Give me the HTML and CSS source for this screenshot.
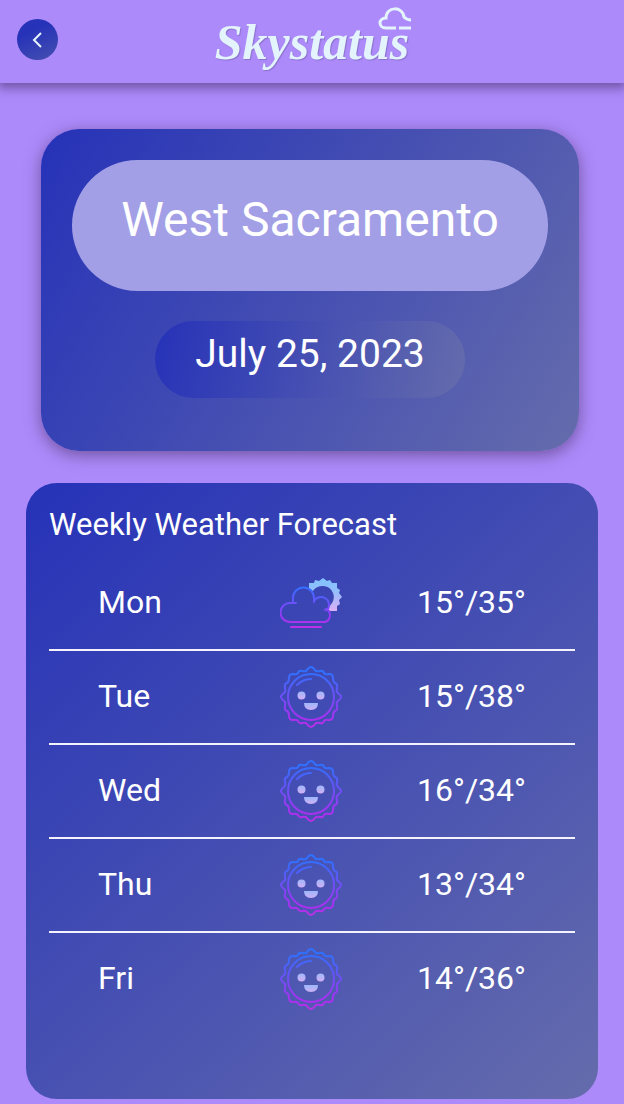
FILE: index.html
```html
<!DOCTYPE html>
<html lang="en">
<head>
<meta charset="utf-8">
<meta name="viewport" content="width=device-width, initial-scale=1">
<title>Skystatus</title>
<link rel="stylesheet" href="styles.css">
</head>
<body>
<svg class="defs" aria-hidden="true">
  <defs>
    <linearGradient id="line" gradientUnits="userSpaceOnUse" x1="0" y1="0" x2="0" y2="62">
      <stop offset="0.1" stop-color="#3070ff"/><stop offset="0.85" stop-color="#a830f0"/><stop offset="1" stop-color="#c030e8"/>
    </linearGradient>
    <linearGradient id="cloudline" gradientUnits="userSpaceOnUse" x1="0" y1="14" x2="0" y2="56">
      <stop offset="0" stop-color="#3070ff"/><stop offset="0.75" stop-color="#9838f5"/><stop offset="1" stop-color="#c030e8"/>
    </linearGradient>
    <linearGradient id="eye" gradientUnits="userSpaceOnUse" x1="0" y1="25" x2="0" y2="34">
      <stop offset="0" stop-color="#9cb8fa"/><stop offset="1" stop-color="#d4aef4"/>
    </linearGradient>
    <linearGradient id="mouth" gradientUnits="userSpaceOnUse" x1="0" y1="37" x2="0" y2="45">
      <stop offset="0" stop-color="#9cb8fa"/><stop offset="1" stop-color="#d4aef4"/>
    </linearGradient>
    <linearGradient id="ring" gradientUnits="userSpaceOnUse" x1="0" y1="6" x2="0" y2="40">
      <stop offset="0" stop-color="#80c4ff"/><stop offset="0.4" stop-color="#94befc"/><stop offset="1" stop-color="#e0aef4"/>
    </linearGradient>
    <symbol id="sun" viewBox="0 0 62 62">
      <g fill="none" stroke="url(#line)" stroke-width="2" stroke-linejoin="round" stroke-linecap="round">
        <path d="M31 1Q33 1 35 4Q36 6 40 5Q43 4 44 7Q45 9 49 8Q53 8 53 12Q53 16 55 17Q58 18 57 22Q56 26 58 27Q61 29 61 31Q61 33 58 35Q56 36 57 40Q58 44 55 45Q53 46 53 50Q53 54 49 54Q45 53 44 55Q43 58 40 57Q36 56 35 58Q33 61 31 61Q29 61 27 58Q26 56 22 57Q19 58 18 55Q17 53 13 54Q9 54 9 50Q9 46 7 45Q4 44 5 40Q6 36 4 35Q1 33 1 31Q1 29 4 27Q6 26 5 22Q4 18 7 17Q9 16 9 12Q9 8 13 8Q17 9 18 7Q19 4 22 5Q26 6 27 4Q29 1 31 1Z"/>
        <circle cx="31" cy="31" r="23"/>
        <path d="M17 19Q23 13 31 13"/>
      </g>
      <circle cx="21.500" cy="29.500" r="4" fill="url(#eye)"/>
      <circle cx="40.500" cy="29.500" r="4" fill="url(#eye)"/>
      <path fill="url(#mouth)" d="M24 37H38Q38 44 31 44Q24 44 24 37Z"/>
    </symbol>
    <symbol id="cloudy" viewBox="0 0 62 62">
      <path fill="url(#ring)" d="M29 11L34 11L35 8L39 9L43 6L47 9L50 8L52 11L57 11L57 16L60 18L59 21L62 25L59 28L60 32L57 34L57 39L50 39L47 37Q50 34 52 31Q55 26 53 21Q50 14 43 14Q36 14 33 19L29 16Z"/>
      <g fill="none" stroke="url(#cloudline)" stroke-width="2" stroke-linecap="round">
        <path d="M16 31H10A9.500 9.500 0 0 0 10 50H45A7 7 0 0 0 46 37"/>
        <path d="M13 30V26A10.500 10.500 0 0 1 34 26V30"/>
        <path d="M34 29A8 8 0 0 1 48 37L45 38"/>
        <path d="M11 55H41"/>
      </g>
    </symbol>
  </defs>
</svg>

<header class="topbar">
  <button class="back" type="button" aria-label="Back">
    <svg class="chevron" viewBox="0 0 16 16" aria-hidden="true"><path d="M11 1L4 8L11 15"/></svg>
  </button>
  <div class="logo">
    <span class="wordmark">Skystatus</span>
    <svg class="logo-cloud" viewBox="0 0 34 24" aria-hidden="true"><path d="M18 21H8C0 21 0 11 8 11C8 -1 25 -1 26 10Q29 13 33 13M21 21H33"/></svg>
  </div>
</header>

<main class="page">
  <section class="place">
    <h1 class="city">West Sacramento</h1>
    <p class="date">July 25, 2023</p>
  </section>
  <section class="forecast">
    <h2 class="title">Weekly Weather Forecast</h2>
    <table class="days">
      <tbody>
        <tr><th scope="row">Mon</th><td><svg class="icon" role="img" aria-label="Partly cloudy"><use href="#cloudy"/></svg></td><td class="temp">15°/35°</td></tr>
        <tr><th scope="row">Tue</th><td><svg class="icon" role="img" aria-label="Sunny"><use href="#sun"/></svg></td><td class="temp">15°/38°</td></tr>
        <tr><th scope="row">Wed</th><td><svg class="icon" role="img" aria-label="Sunny"><use href="#sun"/></svg></td><td class="temp">16°/34°</td></tr>
        <tr><th scope="row">Thu</th><td><svg class="icon" role="img" aria-label="Sunny"><use href="#sun"/></svg></td><td class="temp">13°/34°</td></tr>
        <tr><th scope="row">Fri</th><td><svg class="icon" role="img" aria-label="Sunny"><use href="#sun"/></svg></td><td class="temp">14°/36°</td></tr>
      </tbody>
    </table>
  </section>
</main>
</body>
</html>
```
FILE: styles.css
```css
* { box-sizing: border-box; }

body {
  margin: 0;
  background: #ad8afa;
  color: #fff;
  font-family: Roboto, "Liberation Sans", sans-serif;
}

.defs { position: absolute; width: 0; height: 0; }

.topbar {
  display: grid;
  grid-template-columns: 1fr auto 1fr;
  align-items: center;
  padding: 0 17px;
  min-height: 83px;
  background: #ad8afa;
  box-shadow: 0 3px 10px 2px rgba(50, 30, 80, 0.5);
}

.back {
  display: grid;
  place-items: center;
  width: 41px;
  height: 41px;
  margin-bottom: 4px;
  padding: 0;
  border: 0;
  border-radius: 50%;
  background: linear-gradient(155deg, #2632b8 30%, #4650b0);
}

.chevron {
  width: 16px;
  height: 16px;
  fill: none;
  stroke: #e6f4fc;
  stroke-width: 2;
}

.logo { position: relative; color: #e4f4fc; }

.wordmark {
  display: block;
  font: italic bold 50px/56px "Liberation Serif", serif;
  text-shadow: 1px 1px 1px rgba(60, 60, 100, 0.3);
}

.logo-cloud {
  position: absolute;
  top: -7px;
  right: -3px;
  width: 34px;
  height: 24px;
  fill: none;
  stroke: #e4f4fc;
  stroke-width: 3;
}

.page { padding: 46px 26px 5px; }

.place {
  display: flex;
  flex-direction: column;
  align-items: center;
  gap: 30px;
  margin: 0 19px 32px 15px;
  padding: 31px 31px 53px;
  border-radius: 38px;
  background: linear-gradient(121deg, #2632b8, #454fb2 50%, #656cac);
  box-shadow: 0 4px 16px rgba(50, 30, 70, 0.5);
}

.city {
  align-self: stretch;
  margin: 0;
  padding: 32px 16px 43px;
  border-radius: 66px;
  background: #a39fe6;
  font-size: 48px;
  font-weight: 400;
  line-height: 56px;
  text-align: center;
}

.date {
  margin: 0;
  padding: 10px 40px 21px;
  border-radius: 38px;
  background: linear-gradient(104deg, #2632b8, #454fb2 50%, #656cac);
  font-size: 39px;
  line-height: 46px;
}

.forecast {
  padding: 24px 23px 74px;
  border-radius: 31px;
  background: linear-gradient(137deg, #2632b8, #454fb2 50%, #656cac);
}

.title {
  margin: 0 0 14px;
  font-size: 31px;
  font-weight: 400;
  line-height: 36px;
}

.days {
  width: 100%;
  border-collapse: separate;
  border-spacing: 0;
  table-layout: fixed;
  font-size: 32px;
  line-height: 38px;
}

.days th,
.days td {
  height: 94px;
  padding: 0 2px 0 0;
  border-bottom: 2px solid #f4f2fc;
  text-align: center;
  vertical-align: middle;
}

.days th {
  padding: 0 0 2px 49px;
  font-weight: 400;
  text-align: left;
}

.days td.temp {
  padding: 0 49px 2px 0;
  text-align: right;
}

.days tr:last-child th,
.days tr:last-child td { height: 92px; border-bottom: 0; }

.icon {
  display: block;
  width: 62px;
  height: 62px;
  margin: 0 auto;
}
```
